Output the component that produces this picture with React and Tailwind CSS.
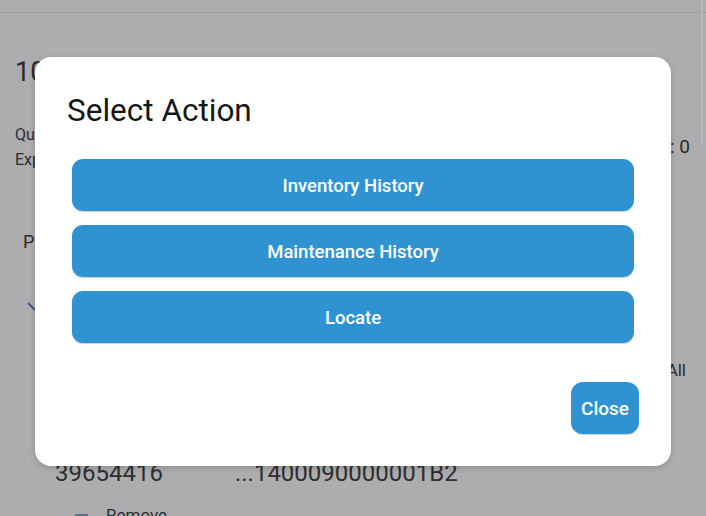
import React from "react"

const actions = ["Inventory History", "Maintenance History", "Locate"]

const App = () => {
  return (
    <div
      className="relative w-[706px] h-[516px] overflow-hidden bg-[#adadaf] text-[#2b2b2d]"
      style={{ fontFamily: "Roboto, 'Noto Sans', sans-serif" }}
    >
      {/* Page behind the dialog */}
      <div className="h-[13px] border-b border-[#9c9c9e]" />
      <div className="absolute right-[3px] top-0 h-[145px] w-[2px] bg-[#b9b9bb]" />

      <div className="pl-[15px] pr-[16px]">
        <div className="mt-[43px] text-[27px] leading-[32px]">1000120</div>

        <div className="mt-[34px] flex items-center justify-between">
          <div className="text-[16px] leading-[25px]">
            <div>Quantity</div>
            <div>Expected</div>
          </div>
          <div className="text-[19px]">Scanned : 0</div>
        </div>

        <div className="mt-[58px] pl-[8px] text-[18px] leading-[24px]">Products</div>

        <div className="mt-[46px] pl-[12px] text-[#3d5a7e]">
          <svg width="12" height="12" viewBox="0 0 12 12" fill="none" stroke="currentColor" strokeWidth="2">
            <path d="M1 3l7 7" />
          </svg>
        </div>

        <div className="mt-[48px] text-right text-[17px] leading-[20px] pr-[4px]">Select All</div>

        <div className="mt-[79px] pl-[40px] flex items-center gap-[72px] text-[24px] leading-[28px] text-[#2e2e30]">
          <span>39654416</span>
          <span>...1400090000001B2</span>
        </div>

        <div className="mt-[16px] pl-[60px] flex items-center gap-[18px] text-[17px]">
          <span className="block w-[13px] h-[3px] bg-[#5a7394]" />
          <span>Remove</span>
        </div>
      </div>

      {/* Dialog */}
      <div className="absolute left-[35px] top-[57px] w-[636px] h-[409px] rounded-[16px] bg-white shadow-[0_2px_6px_rgba(0,0,0,0.18)] flex flex-col">
        <h2 className="pt-[35px] pl-[32px] text-[31.5px] leading-[37px] font-normal text-[#151515]">
          Select Action
        </h2>

        <div className="mt-[30px] px-[37px] flex flex-col gap-[14px]">
          {actions.map((label) => (
            <button
              key={label}
              className="h-[52px] w-full rounded-[11px] bg-[#2f93d1] pt-[3px] text-white text-[18.5px] font-medium shadow-[0_1px_1px_rgba(0,0,0,0.2)]"
            >
              {label}
            </button>
          ))}
        </div>

        <div className="mt-auto pb-[32px] pr-[32px] flex justify-end">
          <button className="h-[52px] w-[68px] rounded-[12px] bg-[#2f93d1] pt-[2px] text-white text-[19px] font-medium shadow-[0_1px_1px_rgba(0,0,0,0.2)]">
            Close
          </button>
        </div>
      </div>
    </div>
  )
}

export default App
